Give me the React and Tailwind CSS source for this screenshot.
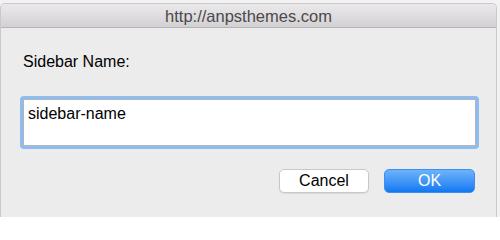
export default function App() {
  const font = { fontFamily: '"Liberation Sans", Arial, sans-serif' };
  return (
    <div className="w-[500px] h-[217px] bg-[#f2f2f2] pt-[3px] pr-[3px] overflow-hidden" style={font}>
      <div className="h-full flex flex-col rounded-t-[5px] border-l border-r border-t border-[#c9c9c9] bg-[#ececec] overflow-hidden">
        <div className="h-[24px] shrink-0 flex items-center justify-center bg-gradient-to-b from-[#ebe9eb] to-[#d3d1d3] border-b border-[#b4b4b4]">
          <span className="text-[16.5px] leading-[18px] text-[#4a4a4a] mt-[1px]">http://anpsthemes.com</span>
        </div>
        <div className="flex-1 flex flex-col pl-[19px] pr-[17px]">
          <div className="mt-[25px] pl-[3px] text-[16px] leading-[18px] text-black">Sidebar Name:</div>
          <div className="mt-[25px] h-[53px] rounded-[4px] bg-[#8fbcf0] p-[3px]">
            <div className="h-full bg-white border border-[#b5b5b5] pl-[4px] pt-[5px] text-[16px] leading-[18px] text-black">
              sidebar-name
            </div>
          </div>
          <div className="mt-[20px] flex justify-end gap-[15px] pr-[4px]">
            <div className="w-[90px] h-[24px] rounded-[5px] bg-white border border-[#c8c8c8] shadow-[0_1px_1px_rgba(0,0,0,0.08)] flex items-center justify-center text-[16px] leading-[18px] text-black">
              Cancel
            </div>
            <div className="w-[91px] h-[24px] rounded-[5px] bg-gradient-to-b from-[#6cb3fa] to-[#0a78f2] border border-[#3d8ef0] flex items-center justify-center text-[16px] leading-[18px] text-white">
              OK
            </div>
          </div>
        </div>
      </div>
    </div>
  );
}
